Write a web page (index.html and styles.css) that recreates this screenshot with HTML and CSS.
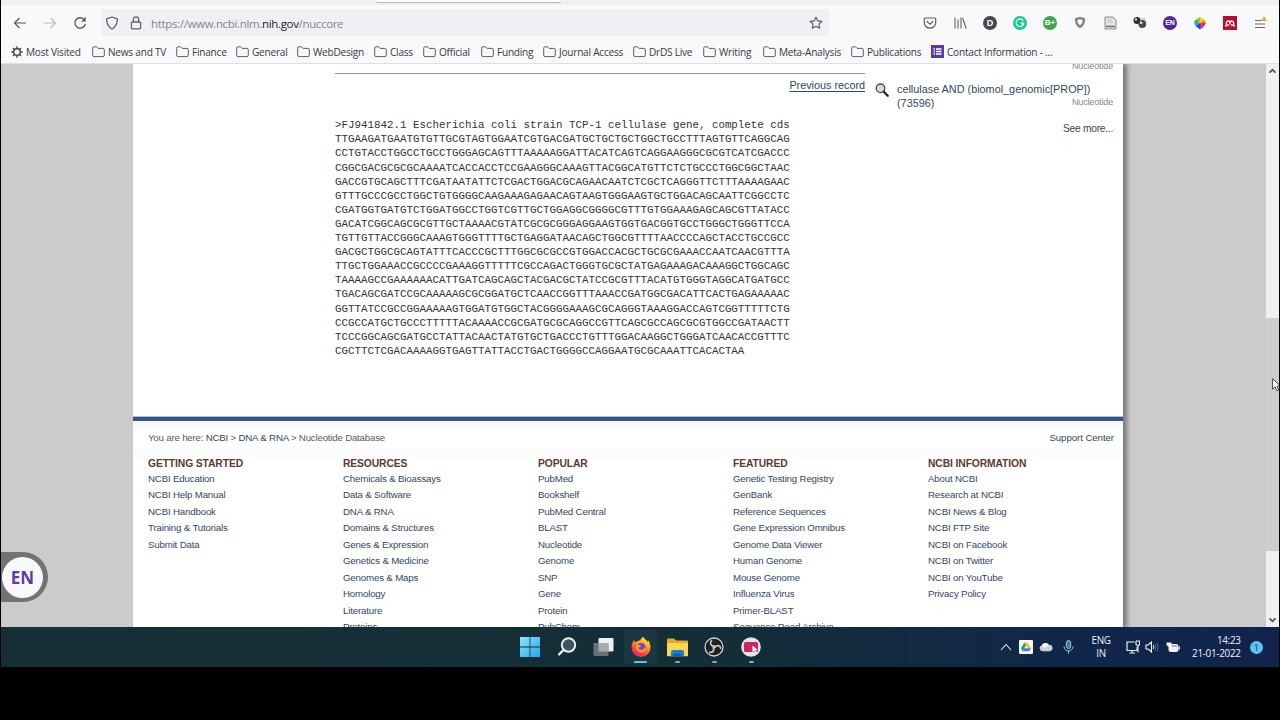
FILE: index.html
```html
<!DOCTYPE html>
<html lang="en">
<head>
    <meta charset="UTF-8">
    <meta name="viewport" content="width=device-width, initial-scale=1.0">
    <title>Nucleotide</title>
    <link rel="stylesheet" href="styles.css">
</head>
<body>
<svg class="defs" width="0" height="0">
    <symbol id="folder" viewBox="0 0 13 12"><path d="M.7 2.2q0-1.4 1.4-1.4h2.4l1.6 1.6h4.8q1.4 0 1.4 1.4v5.4q0 1.4-1.4 1.4H2.1Q.7 10.600.7 9.200z" fill="none" stroke="#5c5c63" stroke-width="1"/></symbol>
</svg>
<div class="screen">
    <!-- browser -->
    <div class="tabstrip"><div class="tab"></div></div>
    <div class="toolbar">
        <div class="nav">
            <svg width="14" height="14" viewBox="0 0 14 14"><path d="M13 7H1.500M6.500 2l-5 5 5 5" fill="none" stroke="#55555c" stroke-width="1.2"/></svg>
            <svg width="14" height="14" viewBox="0 0 14 14"><path d="M1 7h11.500M7.500 2l5 5-5 5" fill="none" stroke="#bcbcc0" stroke-width="1.2"/></svg>
            <svg width="14" height="14" viewBox="0 0 14 14"><path d="M11.400 4A5.200 5.200 0 1 0 12.200 8" fill="none" stroke="#55555c" stroke-width="1.3"/><path d="M12.700.8v4.700H8z" fill="#55555c"/></svg>
        </div>
        <div class="urlbar">
            <svg width="14" height="14" viewBox="0 0 14 14"><path d="M7 1l5.300 1.800c.2 4.700-1.600 8-5.300 10.200C3.300 10.800 1.500 7.500 1.700 2.800z" fill="none" stroke="#606067" stroke-width="1.300" stroke-linejoin="round"/></svg>
            <svg width="12" height="14" viewBox="0 0 12 14"><rect x="1.400" y="6" width="9.200" height="6.800" rx="1.300" fill="none" stroke="#606067" stroke-width="1.300"/><path d="M3.400 6V3.400a2.600 2.600 0 0 1 5.200 0V6" fill="none" stroke="#606067" stroke-width="1.300"/></svg>
            <span class="url">https://www.ncbi.nlm.<b>nih.gov</b>/nuccore</span>
            <svg class="star" width="14" height="14" viewBox="0 0 14 14"><path d="M7 1.200l1.800 3.700 4.100.5-3 2.800.8 4.100L7 10.300l-3.700 2 .8-4.100-3-2.800 4.100-.5z" fill="none" stroke="#55555c" stroke-width="1.100" stroke-linejoin="round"/></svg>
        </div>
        <div class="addons">
            <i><svg width="14" height="14" viewBox="0 0 14 14"><path d="M2.300 2h9.400q1 0 1 1v3.500a5.700 5.700 0 0 1-11.400 0V3q0-1 1-1zM4 5.500l3 2.800 3-2.800" fill="none" stroke="#606067" stroke-width="1.200" stroke-linecap="round"/></svg></i>
            <i><svg width="14" height="14" viewBox="0 0 14 14"><path d="M2 1.500v11M5 3.500v9M8 1.500v11M9.600 2l3.600 10.500" fill="none" stroke="#606067" stroke-width="1.100"/></svg></i>
            <i><span class="dot dark">D</span></i>
            <i><span class="dot mint"><svg width="10" height="10" viewBox="0 0 10 10"><path d="M8.200 2.600A3.800 3.800 0 1 0 8.800 5H5.600M7.200 6.900l1.700-2" fill="none" stroke="#fff" stroke-width="1.100"/></svg></span></i>
            <i><span class="dot green">B+</span></i>
            <i><svg width="12" height="13" viewBox="0 0 12 13"><path d="M6 .8L11 2.200c.3 4.800-1.200 8-5 10C2.200 10.200.7 7 1 2.200z" fill="#858588"/><path d="M6 3.200l2.600.8c0 2.400-.8 4-2.600 5.300C4.200 8 3.400 6.400 3.400 4z" fill="#f9f9fb"/></svg></i>
            <i><svg width="13" height="14" viewBox="0 0 13 14"><path d="M1 1h8l3 3v9H1z" fill="#e3e3e4" stroke="#8b8b8e"/><path d="M3 4h5M3 6h6" stroke="#c4c4c6"/><path d="M2 10.500h9" stroke="#77777a" stroke-width="1.600"/></svg></i>
            <i><svg width="14" height="13" viewBox="0 0 14 13"><circle cx="4" cy="4.500" r="3.500" fill="#2c2c2e"/><circle cx="3" cy="3.500" r="1.200" fill="#cfcfd0"/><circle cx="10" cy="4.500" r="2.800" fill="#d1d1d3"/><circle cx="9.300" cy="8" r="3.900" fill="#4b4b4d"/><circle cx="8.200" cy="6.800" r="1.300" fill="#e8e8e9"/></svg></i>
            <i><span class="dot violet">EN</span></i>
            <i><svg width="14" height="14" viewBox="0 0 14 14"><path d="M7 7V1l4 2.500z" fill="#f5d21f"/><path d="M7 7l4-3.500L13 7z" fill="#f08a24"/><path d="M7 7h6l-2.500 4z" fill="#de3131"/><path d="M7 7l3.500 4L7 13.500z" fill="#c521a8"/><path d="M7 7v6.500L2.500 10z" fill="#3838d0"/><path d="M7 7l-4.500 3L1 6z" fill="#22a3e0"/><path d="M7 7L1 6l2.500-3z" fill="#27b34a"/><path d="M7 7L3.500 3 7 1z" fill="#8fd02d"/></svg></i>
            <i><svg width="14" height="14" viewBox="0 0 14 14"><rect width="14" height="14" fill="#b1112d"/><path d="M2.300 10.300q1.300-.5 1-2.800c-.3-2.800 3-3.400 3.700-1 .7-2.400 4-1.800 3.700 1q-.3 2.300 1 2.800M5 10.300V8M9 10.300V8M7 6.500v2" fill="none" stroke="#fff" stroke-width="1.300"/></svg></i>
            <i><svg width="14" height="16" viewBox="0 0 14 16"><path d="M2 5.500h7M2 9h10M2 12.500h10" stroke="#66666c" stroke-width="1.100"/><path d="M11 1l3 5H8z" fill="#eda24c"/></svg></i>
        </div>
    </div>
    <div class="bookmarks">
        <div><svg width="12" height="12" viewBox="0 0 12 12"><circle cx="6" cy="6" r="3.300" fill="none" stroke="#45454b" stroke-width="1.400"/><path d="M6 .3v2.500M6 9.200v2.500M.3 6h2.500M9.200 6h2.500M2 2l1.700 1.700M8.300 8.300L10 10M10 2L8.300 3.700M3.700 8.300L2 10" stroke="#45454b" stroke-width="1.400"/></svg>Most Visited</div>
        <div><svg width="13" height="12"><use href="#folder"/></svg>News and TV</div>
        <div><svg width="13" height="12"><use href="#folder"/></svg>Finance</div>
        <div><svg width="13" height="12"><use href="#folder"/></svg>General</div>
        <div><svg width="13" height="12"><use href="#folder"/></svg>WebDesign</div>
        <div><svg width="13" height="12"><use href="#folder"/></svg>Class</div>
        <div><svg width="13" height="12"><use href="#folder"/></svg>Official</div>
        <div><svg width="13" height="12"><use href="#folder"/></svg>Funding</div>
        <div><svg width="13" height="12"><use href="#folder"/></svg>Journal Access</div>
        <div><svg width="13" height="12"><use href="#folder"/></svg>DrDS Live</div>
        <div><svg width="13" height="12"><use href="#folder"/></svg>Writing</div>
        <div><svg width="13" height="12"><use href="#folder"/></svg>Meta-Analysis</div>
        <div><svg width="13" height="12"><use href="#folder"/></svg>Publications</div>
        <div><svg width="13" height="13" viewBox="0 0 13 13"><rect width="13" height="13" fill="#5c3a9c"/><path d="M2.500 4h1.500M2.500 6.500h1.500M2.500 9h1.500M5 4h5.500M5 6.500h5.500M5 9h5.500" stroke="#fff" stroke-width="1.300"/></svg>Contact Information - ...</div>
    </div>

    <!-- web page -->
    <div class="viewport">
        <div class="page">
            <div class="content">
                <div class="record">
                    <a class="prev">Previous record</a>
<pre>&gt;FJ941842.1 Escherichia coli strain TCP-1 cellulase gene, complete cds
TTGAAGATGAATGTGTTGCGTAGTGGAATCGTGACGATGCTGCTGCTGGCTGCCTTTAGTGTTCAGGCAG
CCTGTACCTGGCCTGCCTGGGAGCAGTTTAAAAAGGATTACATCAGTCAGGAAGGGCGCGTCATCGACCC
CGGCGACGCGCGCAAAATCACCACCTCCGAAGGGCAAAGTTACGGCATGTTCTCTGCCCTGGCGGCTAAC
GACCGTGCAGCTTTCGATAATATTCTCGACTGGACGCAGAACAATCTCGCTCAGGGTTCTTTAAAAGAAC
GTTTGCCCGCCTGGCTGTGGGGCAAGAAAGAGAACAGTAAGTGGGAAGTGCTGGACAGCAATTCGGCCTC
CGATGGTGATGTCTGGATGGCCTGGTCGTTGCTGGAGGCGGGGCGTTTGTGGAAAGAGCAGCGTTATACC
GACATCGGCAGCGCGTTGCTAAAACGTATCGCGCGGGAGGAAGTGGTGACGGTGCCTGGGCTGGGTTCCA
TGTTGTTACCGGGCAAAGTGGGTTTTGCTGAGGATAACAGCTGGCGTTTTAACCCCAGCTACCTGCCGCC
GACGCTGGCGCAGTATTTCACCCGCTTTGGCGCGCCGTGGACCACGCTGCGCGAAACCAATCAACGTTTA
TTGCTGGAAACCGCCCCGAAAGGTTTTTCGCCAGACTGGGTGCGCTATGAGAAAGACAAAGGCTGGCAGC
TAAAAGCCGAAAAAACATTGATCAGCAGCTACGACGCTATCCGCGTTTACATGTGGGTAGGCATGATGCC
TGACAGCGATCCGCAAAAAGCGCGGATGCTCAACCGGTTTAAACCGATGGCGACATTCACTGAGAAAAAC
GGTTATCCGCCGGAAAAAGTGGATGTGGCTACGGGGAAAGCGCAGGGTAAAGGACCAGTCGGTTTTTCTG
CCGCCATGCTGCCCTTTTTACAAAACCGCGATGCGCAGGCCGTTCAGCGCCAGCGCGTGGCCGATAACTT
TCCCGGCAGCGATGCCTATTACAACTATGTGCTGACCCTGTTTGGACAAGGCTGGGATCAACACCGTTTC
CGCTTCTCGACAAAAGGTGAGTTATTACCTGACTGGGGCCAGGAATGCGCAAATTCACACTAA</pre>
                </div>
                <div class="recent">
                    <div class="db">Nucleotide</div>
                    <div class="search">
                        <svg width="14" height="14" viewBox="0 0 14 14"><circle cx="5.500" cy="5.300" r="4.300" fill="#d5dadd" stroke="#4c4c4c" stroke-width="1.300"/><path d="M8.800 8.800l3.900 3.900" stroke="#222" stroke-width="2.300" stroke-linecap="round"/></svg>
                        <div class="query">
                            <a>cellulase AND (biomol_genomic[PROP])</a>
                            <div class="count"><a>(73596)</a><span class="db">Nucleotide</span></div>
                        </div>
                    </div>
                    <a class="more">See more...</a>
                </div>
            </div>
            <div class="footer">
                <div class="crumbs">
                    <span>You are here: <a>NCBI</a> &gt; <a>DNA &amp; RNA</a> &gt; Nucleotide Database</span>
                    <a class="support">Support Center</a>
                </div>
                <div class="links">
                    <div>
                        <h3>GETTING STARTED</h3>
                        <a>NCBI Education</a><a>NCBI Help Manual</a><a>NCBI Handbook</a><a>Training &amp; Tutorials</a><a>Submit Data</a>
                    </div>
                    <div>
                        <h3>RESOURCES</h3>
                        <a>Chemicals &amp; Bioassays</a><a>Data &amp; Software</a><a>DNA &amp; RNA</a><a>Domains &amp; Structures</a><a>Genes &amp; Expression</a><a>Genetics &amp; Medicine</a><a>Genomes &amp; Maps</a><a>Homology</a><a>Literature</a><a>Proteins</a>
                    </div>
                    <div>
                        <h3>POPULAR</h3>
                        <a>PubMed</a><a>Bookshelf</a><a>PubMed Central</a><a>BLAST</a><a>Nucleotide</a><a>Genome</a><a>SNP</a><a>Gene</a><a>Protein</a><a>PubChem</a>
                    </div>
                    <div>
                        <h3>FEATURED</h3>
                        <a>Genetic Testing Registry</a><a>GenBank</a><a>Reference Sequences</a><a>Gene Expression Omnibus</a><a>Genome Data Viewer</a><a>Human Genome</a><a>Mouse Genome</a><a>Influenza Virus</a><a>Primer-BLAST</a><a>Sequence Read Archive</a>
                    </div>
                    <div>
                        <h3>NCBI INFORMATION</h3>
                        <a>About NCBI</a><a>Research at NCBI</a><a>NCBI News &amp; Blog</a><a>NCBI FTP Site</a><a>NCBI on Facebook</a><a>NCBI on Twitter</a><a>NCBI on YouTube</a><a>Privacy Policy</a>
                    </div>
                </div>
            </div>
        </div>
        <div class="scrollbar">
            <svg width="9" height="6" viewBox="0 0 9 6"><path d="M1.500 4.700l3-3 3 3" fill="none" stroke="#505050" stroke-width="1.700"/></svg>
            <div class="thumb"></div>
            <svg width="9" height="6" viewBox="0 0 9 6"><path d="M1.500 1.300l3 3 3-3" fill="none" stroke="#505050" stroke-width="1.700"/></svg>
        </div>
        <div class="lang-widget"><span>EN</span></div>
        <svg class="cursor" width="10" height="14" viewBox="0 0 10 14"><path d="M.6.8v10.400l2.500-2.300 1.700 3.800 1.800-.8L5 8.200h3.600z" fill="#fff" stroke="#333" stroke-width=".9"/></svg>
    </div>

    <!-- taskbar -->
    <div class="taskbar">
        <div class="apps">
            <i><svg width="20" height="20" viewBox="0 0 20 20"><defs><linearGradient id="win" x2="1" y2="1"><stop stop-color="#8fe3fb"/><stop offset="1" stop-color="#21a7ea"/></linearGradient></defs><path d="M0 0h9.600v9.600H0zM10.400 0H20v9.600h-9.600zM0 10.400h9.600V20H0zM10.400 10.400H20V20h-9.600z" fill="url(#win)"/></svg></i>
            <i><svg width="20" height="20" viewBox="0 0 20 20"><circle cx="11.500" cy="8" r="6.700" fill="#3d545d" stroke="#eef2f3" stroke-width="1.900"/><path d="M6.500 13l-4.500 4.500" stroke="#eef2f3" stroke-width="2.300" stroke-linecap="round"/></svg></i>
            <i><svg width="21" height="20" viewBox="0 0 21 20"><rect x="5.500" y="1" width="15" height="13.500" rx="1" fill="#eef0f1"/><rect x=".5" y="6" width="15" height="13" rx="1" fill="#707a80" opacity=".9"/><path d="M5.500 6h10v8.500h-10z" fill="#a7abae"/></svg></i>
            <i class="active"><svg width="20" height="20" viewBox="0 0 20 20"><defs><linearGradient id="fox" x1=".8" y1="0" x2=".3" y2="1"><stop stop-color="#fff04a"/><stop offset=".4" stop-color="#ff9a1f"/><stop offset=".75" stop-color="#fb3b47"/><stop offset="1" stop-color="#e0268e"/></linearGradient></defs><path d="M12.500 0c1 2.300 3 3 4.200 4.800l.8-1.300c1.300 2.500 2 5 2 7.200a9.500 9.300 0 0 1-19 0C.5 7.500 1.500 5 3.300 3l.4 2 2.200-.5C7 3.500 8 3.500 9 3.600c.5-1.600 1.800-3 3.500-3.600z" fill="url(#fox)"/><circle cx="10" cy="10.500" r="4.600" fill="#7e3fd0"/><path d="M5 7.500q3.500-.5 5 1.500-1 1.600-3 1.600 1 2.800 4.300 2.200 2.500-.6 2.700-3l.8 2.800q-1.500 3-5 3-4.800-.4-5.200-5z" fill="#ff9a25"/></svg><u></u></i>
            <i><svg width="21" height="19" viewBox="0 0 21 19"><path d="M0 1.500Q0 .5 1 .5h6l2 2h11q1 0 1 1V18H0z" fill="#e4a92c"/><path d="M0 5h21v12.500q0 .8-.8.800H.8q-.8 0-.8-.8z" fill="#fbd64f"/><path d="M4 18.300v-4.200q0-2 2-2h9q2 0 2 2v4.200z" fill="#1f7fc8"/><path d="M6.500 15.500h8v2.800h-8z" fill="#14609f"/></svg><u></u></i>
            <i><svg width="20" height="20" viewBox="0 0 20 20"><circle cx="10" cy="10" r="9" fill="#1d2123" stroke="#d3d6d8" stroke-width="1.300"/><g fill="none" stroke="#c5c9cb" stroke-width="1.700" stroke-linecap="round"><path id="blade" d="M10 9.200C6.300 8.700 5.600 5.500 7.600 3.700"/><use href="#blade" transform="rotate(120 10 10)"/><use href="#blade" transform="rotate(240 10 10)"/></g><circle cx="10" cy="10" r="1.400" fill="#c5c9cb"/></svg><u></u></i>
            <i><svg width="20" height="20" viewBox="0 0 20 20"><circle cx="10" cy="10" r="9.800" fill="#e6e3e6"/><rect x="3" y="5" width="14" height="10" rx="1.500" fill="#c9285f"/><path d="M11.500 8.500v6.800l1.800-1.500 1.200 2.400 1.200-.6-1.100-2.300h2.200z" fill="#fff"/></svg><u></u></i>
        </div>
        <div class="tray">
            <i><svg width="12" height="8" viewBox="0 0 12 8"><path d="M1 7l5-5.500L11 7" fill="none" stroke="#e8ebee" stroke-width="1.100"/></svg></i>
            <i><svg width="14" height="14" viewBox="0 0 14 14"><rect width="14" height="14" rx="1" fill="#f7f7f5"/><path d="M5.400 2.500h3.200L12 8.300H8.800z" fill="#f6bf26"/><path d="M5.400 2.500L2 8.300l1.600 2.900 3.400-5.900z" fill="#23a566"/><path d="M3.600 11.200h6.800L12 8.300H5.200z" fill="#3f7de0"/></svg></i>
            <i><svg width="14" height="10" viewBox="0 0 14 10"><path d="M3.300 9.200A3 3 0 0 1 2.600 3.400 4.200 4.200 0 0 1 10 2.900a3.200 3.200 0 0 1 1.100 6.300z" fill="#ccd2d8"/><path d="M2.600 3.400A4.200 4.200 0 0 1 10 2.900L6 6z" fill="#f4f6f7"/></svg></i>
            <i><svg width="11" height="14" viewBox="0 0 11 14"><rect x="3.300" y=".6" width="4.400" height="8" rx="2.200" fill="#3f7a9c" stroke="#b9d9e7" stroke-width=".8"/><path d="M1 6.500a4.500 4.500 0 0 0 9 0M5.500 11v2.700" fill="none" stroke="#9fc9dc" stroke-width="1"/></svg></i>
            <div class="ime">ENG<br>IN</div>
            <i><svg width="14" height="14" viewBox="0 0 14 14"><path d="M8.500 2H1v8.500h10V7M3.500 13h5.500M6 10.500V13" fill="none" stroke="#eef1f4" stroke-width="1.200"/><path d="M10 1h3.500v3.500L12 6v6.500M10 1v3.500L12 6" fill="none" stroke="#eef1f4" stroke-width="1.100"/></svg></i>
            <i><svg width="14" height="12" viewBox="0 0 14 12"><path d="M1 4v4h2.200L6.500 11V1L3.200 4z" fill="none" stroke="#eef1f4" stroke-width="1.100"/><path d="M8.300 4q1.300 2 0 4" fill="none" stroke="#eef1f4"/><path d="M10 2.500q2.300 3.500 0 7M12 1.500q2.500 4.500 0 9" fill="none" stroke="#61708b" stroke-width=".8"/></svg></i>
            <i><svg width="14" height="12" viewBox="0 0 14 12"><rect x="3" y="3.500" width="9" height="7" rx="1.500" fill="#f0f3f5" stroke="#f0f3f5"/><path d="M13.300 5.500v3" stroke="#f0f3f5" stroke-width="1.200"/><path d="M.5 1.500h5v2.500L4 5.500H2L.5 4z" fill="#f0f3f5"/><path d="M6 5h5" stroke="#33496a" stroke-width=".8"/></svg></i>
            <div class="clock">14:23<br>21-01-2022</div>
            <span class="badge">1</span>
        </div>
    </div>
</div>
</body>
</html>
```

FILE: styles.css
```css
*{
    box-sizing: border-box;
}
body{
    margin: 0;
    height: 720px;
    background-color: #000;
    overflow: hidden;
    font-family: "Liberation Sans", Arial, sans-serif;
}
svg{
    display: block;
    flex: none;
}
i{
    display: flex;
    align-items: center;
    justify-content: center;
    font-style: normal;
}
.defs{
    position: absolute;
}
.screen{
    margin-left: 1px;
    width: 1278px;
    height: 667px;
    display: flex;
    flex-direction: column;
    overflow: hidden;
}

/* browser */
.tabstrip{
    height: 5px;
    background-color: #f0f0f1;
}
.tab{
    width: 185px;
    height: 2px;
    margin-left: 375px;
    background-color: #fff;
    border-radius: 0 0 3px 3px;
    box-shadow: 0 1px 1px #b5b5b8;
}
.toolbar{
    height: 35px;
    display: flex;
    align-items: center;
    background-color: #f9f9fb;
}
.nav{
    width: 100px;
    padding-left: 12px;
    display: flex;
    gap: 16px;
}
.urlbar{
    width: 728px;
    height: 27px;
    padding: 0 6px 0 4px;
    display: flex;
    align-items: center;
    background-color: #f0f0f4;
    border-radius: 3px;
}
.urlbar svg + svg{
    margin-left: 11px;
}
.url{
    margin: 2px 0 0 9px;
    font-family: "Open Sans", "Noto Sans", sans-serif;
    font-size: 11.5px;
    letter-spacing: -0.34px;
    color: #85858b;
}
.url b{
    font-weight: normal;
    color: #222226;
}
.urlbar .star{
    margin-left: auto;
}
.addons{
    margin-left: 86px;
    display: flex;
}
.addons i{
    width: 30px;
    height: 20px;
}
.dot{
    width: 14px;
    height: 14px;
    border-radius: 50%;
    display: flex;
    align-items: center;
    justify-content: center;
    color: #fff;
    font-size: 8px;
    font-weight: bold;
}
.dark{
    background-color: #48484b;
    font-size: 9px;
}
.mint{
    background-color: #22c598;
}
.green{
    background-color: #3fa548;
}
.violet{
    background-color: #51269a;
    font-size: 7px;
}
.bookmarks{
    height: 24px;
    padding-left: 10px;
    display: grid;
    grid-template-columns: 81px 84px 60px 61px 77px 49px 58px 62px 90px 70px 60px 88px 80px 140px;
    align-items: center;
    background-color: #f9f9fb;
    border-bottom: 1px solid #dfe0e6;
    font-family: "Open Sans", "Noto Sans", sans-serif;
    font-size: 10.1px;
    letter-spacing: -0.24px;
    color: #3a3a40;
    white-space: nowrap;
}
.bookmarks div{
    display: flex;
    align-items: center;
    gap: 3px;
}

/* web page */
.viewport{
    position: relative;
    height: 563px;
    display: flex;
    justify-content: space-between;
    background-color: #cbcbcb;
    overflow: hidden;
}
.page{
    width: 990px;
    margin-left: 132px;
    background-color: #fff;
    box-shadow: 3px 0 5px 1px #777;
    clip-path: inset(0 -9px 0 0);
    color: #34465f;
}
.content{
    height: 353px;
    display: flex;
    gap: 10px;
    padding: 0 10px 0 202px;
}
.record{
    width: 530px;
    margin-top: 9px;
    border-top: 1px solid #8b96a3;
}
.prev{
    display: block;
    margin-top: 4px;
    font-size: 10.8px;
    line-height: 14px;
    text-align: right;
    text-decoration: underline;
    text-underline-offset: 2px;
}
pre{
    margin: 26.3px 0 0;
    font-family: "Liberation Mono", "Courier New", monospace;
    font-size: 10.83px;
    line-height: 14.09px;
    color: #333;
}
.recent{
    width: 238px;
    margin-top: -5px;
    font-size: 10.85px;
}
.db{
    font-size: 9px;
    line-height: 14px;
    letter-spacing: -0.15px;
    text-align: right;
    color: #888;
}
.search{
    margin-top: 10px;
    display: flex;
    gap: 8px;
    line-height: 13.5px;
}
.query{
    flex: 1;
    white-space: nowrap;
}
.count{
    height: 13.5px;
    display: flex;
    justify-content: space-between;
}
.count .db{
    line-height: 11px;
}
.more{
    display: block;
    margin-top: 12px;
    font-size: 10.2px;
    line-height: 14px;
    letter-spacing: -0.24px;
    text-align: right;
}
.footer{
    border-top: 4px solid #3c5478;
    box-shadow: 0 -1px 0 #a9bddb;
}
.crumbs{
    height: 27px;
    padding: 10px 9px 0 15px;
    display: flex;
    justify-content: space-between;
    background-image: linear-gradient(#f6f4f4, #fff 12px);
    font-size: 9.7px;
    line-height: 14px;
    letter-spacing: -0.2px;
    color: #5a5a5e;
}
.crumbs a{
    color: #34465f;
}
.crumbs .support{
    letter-spacing: -0.08px;
}
.links{
    padding: 9px 0 0 15px;
    display: grid;
    grid-template-columns: repeat(5, 195px);
    background-image: linear-gradient(#f9f9f9, #fff 14px);
    font-size: 9.7px;
    letter-spacing: -0.17px;
}
.links h3{
    margin: 0;
    font-size: 10.3px;
    line-height: 14px;
    letter-spacing: -0.1px;
    color: #5c3a30;
}
.links a{
    display: block;
    line-height: 16.46px;
}
.scrollbar{
    width: 13px;
    padding: 4px 0;
    display: flex;
    flex-direction: column;
    align-items: center;
    background-color: #f0f0f0;
}
.thumb{
    width: 13px;
    height: 233px;
    margin: 244px 0 auto;
    background-color: #cdcdcd;
}
.lang-widget{
    position: absolute;
    left: 0;
    top: 488px;
    width: 47px;
    height: 50px;
    padding: 5px 0 0 1px;
    background-color: #737373;
    border-radius: 0 25px 25px 0;
}
.lang-widget span{
    display: block;
    width: 41px;
    height: 41px;
    border-radius: 50%;
    background-color: #f8f7fa;
    color: #5b3da3;
    font: bold 17px/41px "Open Sans", sans-serif;
    text-align: center;
}
.cursor{
    position: absolute;
    left: 1271px;
    top: 314px;
}

/* taskbar */
.taskbar{
    height: 40px;
    padding-left: 511px;
    display: flex;
    background-image: linear-gradient(90deg, #162f37, #142e38 55%, #10264a 85%, #10244c);
    color: #f0f3f6;
}
.apps{
    display: flex;
}
.apps i{
    position: relative;
    width: 36.8px;
    height: 40px;
}
.apps .active{
    background: #1d3742 content-box;
    padding: 3px 2px;
}
.apps u{
    position: absolute;
    left: 16px;
    bottom: 4px;
    width: 5px;
    height: 2px;
    border-radius: 1px;
    background-color: #9aa5aa;
}
.apps .active u{
    left: 12px;
    width: 13px;
    background-color: #62c3ea;
}
.tray{
    margin-left: 226px;
    display: grid;
    grid-template-columns: 20px 20px 21px 24px 41px 22px 17px 24px 56px 30px;
    align-items: center;
    font-family: "Open Sans", "Noto Sans", sans-serif;
    font-size: 9.9px;
    line-height: 13.5px;
    letter-spacing: -0.3px;
}
.ime{
    text-align: center;
}
.clock{
    text-align: right;
}
.badge{
    width: 13px;
    height: 13px;
    margin-left: 9px;
    border-radius: 50%;
    background-color: #5dc3f2;
    color: #16324e;
    font-size: 9px;
    line-height: 13px;
    text-align: center;
}
```
